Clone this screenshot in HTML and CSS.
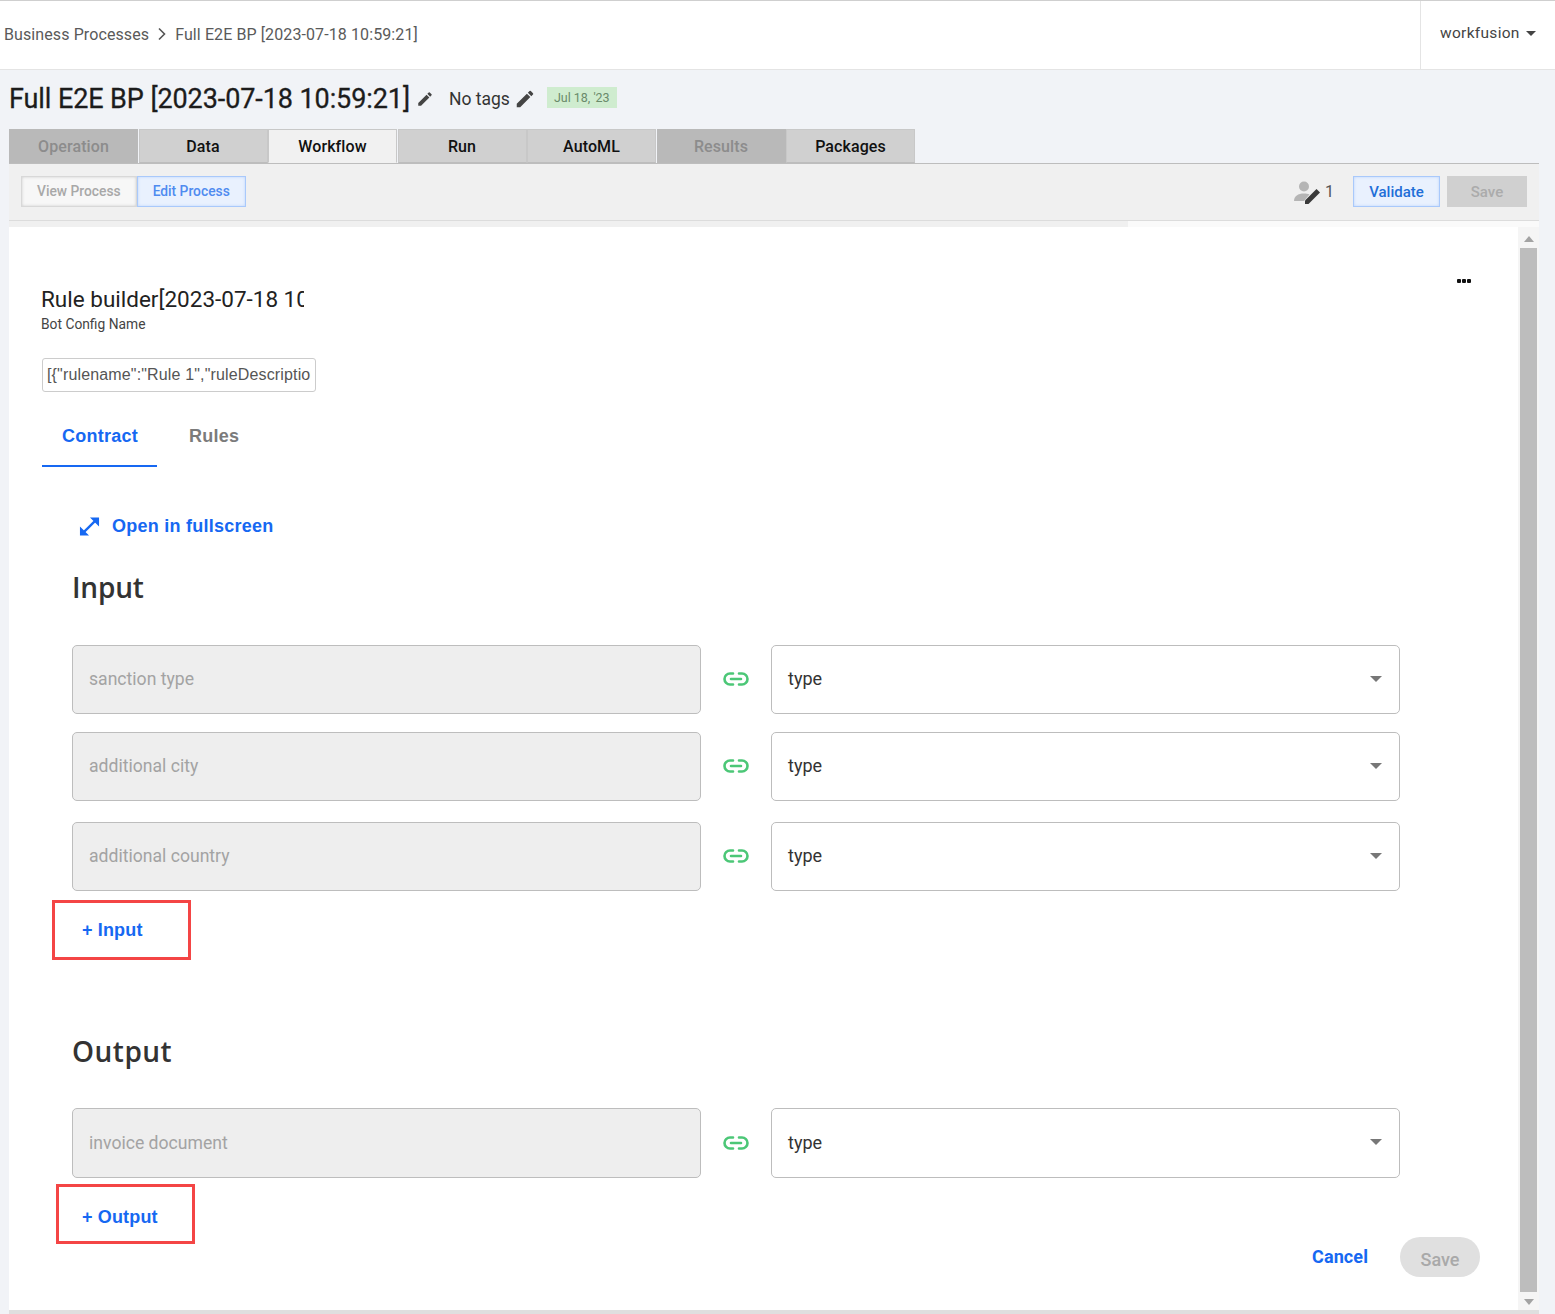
FILE: index.html
```html
<!DOCTYPE html>
<html>
  <head>
    <title>Full E2E BP</title>
    <meta charset="UTF-8">
    <link rel="stylesheet" href="styles.css">
  </head>

  <body>
    <div class="topbar">
      <div class="crumbs">
        <span>Business Processes</span>
        <svg class="crumb-sep" width="10" height="14" viewBox="0 0 10 14"><path d="M2 1.5 7.5 7 2 12.5" fill="none" stroke="#555" stroke-width="1.6"/></svg>
        <span>Full E2E BP [2023-07-18 10:59:21]</span>
      </div>
      <div class="user">workfusion <span class="user-caret"></span></div>
    </div>

    <div class="title-row">
      <h1>Full E2E BP [2023-07-18 10:59:21]</h1>
      <svg class="edit-title" width="18" height="18" viewBox="0 0 24 24"><path fill="#444" d="M3 17.25V21h3.75L17.81 9.94l-3.75-3.75L3 17.25zM20.71 7.04a1 1 0 0 0 0-1.41l-2.34-2.34a1 1 0 0 0-1.41 0l-1.83 1.83 3.75 3.75 1.83-1.83z"/></svg>
      <span class="tags">No tags</span>
      <svg class="edit-tags" width="22" height="22" viewBox="0 0 24 24"><path fill="#444" d="M3 17.25V21h3.75L17.81 9.94l-3.75-3.75L3 17.25zM20.71 7.04a1 1 0 0 0 0-1.41l-2.34-2.34a1 1 0 0 0-1.41 0l-1.83 1.83 3.75 3.75 1.83-1.83z"/></svg>
      <span class="date">Jul 18, '23</span>
    </div>

    <div class="tabs">
      <div class="tab disabled">Operation</div>
      <div class="tab">Data</div>
      <div class="tab active">Workflow</div>
      <div class="tab">Run</div>
      <div class="tab">AutoML</div>
      <div class="tab disabled">Results</div>
      <div class="tab">Packages</div>
    </div>

    <div class="panel">
      <div class="toolbar">
        <div class="mode">
          <div class="mode-btn">View Process</div>
          <div class="mode-btn on">Edit Process</div>
        </div>
        <div class="tools">
          <div class="editors">
            <svg width="30" height="24" viewBox="0 0 30 24">
              <circle cx="11" cy="6.5" r="5" fill="#b5b5b5"/>
              <path d="M1 21c0-5 4-7.500 10-7.500 2 0 4 .3 5.500 1L11 21z" fill="#b5b5b5"/>
              <path d="M12 24v-3.500L23.500 9l3.500 3.500L15.500 24z" fill="#3a3a3a"/>
            </svg>
            <span>1</span>
          </div>
          <div class="btn-validate">Validate</div>
          <div class="btn-save">Save</div>
        </div>
      </div>
      <div class="strip"></div>

      <div class="content">
        <div class="form">
          <div class="form-head">
            <div>
              <div class="bot-title">Rule builder[2023-07-18 10:59:21]</div>
              <div class="bot-label">Bot Config Name</div>
            </div>
            <div class="dots"><i></i><i></i><i></i></div>
          </div>
          <input class="config" type="text" value='[{"rulename":"Rule 1","ruleDescription":""}]' readonly>

          <div class="subtabs">
            <div class="subtab on">Contract</div>
            <div class="subtab">Rules</div>
          </div>

          <div class="fullscreen">
            <svg width="21" height="21" viewBox="0 0 22 22"><path fill="none" stroke="#1668f2" stroke-width="2.400" d="M4 18 18 4"/><path fill="#1668f2" d="M11.500 1.500H21v9.500zM1 11l9.500 9.500H1z"/></svg>
            <span>Open in fullscreen</span>
          </div>

          <h2 class="input-head">Input</h2>
          <div class="row">
            <div class="field">sanction type</div>
            <svg class="link" width="26" height="16" viewBox="0 0 26 16"><path fill="none" stroke="#4cc777" stroke-width="2.600" stroke-linecap="round" d="M10 2.500H7a5.500 5.500 0 0 0 0 11h3M16 2.500h3a5.500 5.500 0 0 1 0 11h-3M8 8h10"/></svg>
            <div class="select">type<span class="caret"></span></div>
          </div>
          <div class="row gap18">
            <div class="field">additional city</div>
            <svg class="link" width="26" height="16" viewBox="0 0 26 16"><path fill="none" stroke="#4cc777" stroke-width="2.600" stroke-linecap="round" d="M10 2.500H7a5.500 5.500 0 0 0 0 11h3M16 2.500h3a5.500 5.500 0 0 1 0 11h-3M8 8h10"/></svg>
            <div class="select">type<span class="caret"></span></div>
          </div>
          <div class="row gap21">
            <div class="field">additional country</div>
            <svg class="link" width="26" height="16" viewBox="0 0 26 16"><path fill="none" stroke="#4cc777" stroke-width="2.600" stroke-linecap="round" d="M10 2.500H7a5.500 5.500 0 0 0 0 11h3M16 2.500h3a5.500 5.500 0 0 1 0 11h-3M8 8h10"/></svg>
            <div class="select">type<span class="caret"></span></div>
          </div>
          <div class="add add-input">+ Input</div>

          <h2 class="output-head">Output</h2>
          <div class="row tall">
            <div class="field">invoice document</div>
            <svg class="link" width="26" height="16" viewBox="0 0 26 16"><path fill="none" stroke="#4cc777" stroke-width="2.600" stroke-linecap="round" d="M10 2.500H7a5.500 5.500 0 0 0 0 11h3M16 2.500h3a5.500 5.500 0 0 1 0 11h-3M8 8h10"/></svg>
            <div class="select">type<span class="caret"></span></div>
          </div>
          <div class="bottom">
            <div class="add add-output">+ Output</div>
            <div class="actions">
              <span class="cancel">Cancel</span>
              <span class="save">Save</span>
            </div>
          </div>
        </div>

        <div class="scroll">
          <span class="arrow-up"></span>
          <div class="thumb"></div>
          <span class="arrow-down"></span>
        </div>
      </div>
    </div>
  </body>
</html>
```

FILE: styles.css
```css
html, body {
  height: 100%;
}

body {
  margin: 0;
  padding: 0;
  height: 1314px;
  overflow: hidden;
  background-color: #f1f3f7;
  font-family: Roboto, "Liberation Sans", sans-serif;
  color: #222;
}

.topbar {
  display: flex;
  justify-content: space-between;
  height: 68px;
  background-color: #fff;
  border-top: 1px solid #cfcfcf;
  border-bottom: 1px solid #e4e4e4;
}

.crumbs {
  display: flex;
  align-items: center;
  gap: 8px;
  padding-left: 4px;
  padding-bottom: 2px;
  font-size: 16px;
  letter-spacing: 0.1px;
  color: #5a5a5a;
}

.user {
  display: flex;
  align-items: center;
  gap: 6px;
  box-sizing: border-box;
  width: 135px;
  padding-bottom: 4px;
  padding-left: 19px;
  border-left: 1px solid #e4e4e4;
  font-size: 15.500px;
  letter-spacing: 0.3px;
  color: #444;
}

.user-caret {
  border-top: 5px solid #444;
  border-left: 5px solid transparent;
  border-right: 5px solid transparent;
}

.title-row {
  display: flex;
  align-items: center;
  box-sizing: border-box;
  height: 59px;
  padding-left: 9px;
  padding-bottom: 2px;
}

h1 {
  margin: 0;
  font-size: 27px;
  font-weight: 400;
  color: #1c1c1c;
  -webkit-text-stroke: 0.3px #1c1c1c;
  letter-spacing: -0.09px;
}

.edit-title {
  margin-left: 6px;
}

.tags {
  margin-left: 15px;
  font-size: 17.500px;
  color: #333;
}

.edit-tags {
  margin-left: 4px;
}

.date {
  margin-left: 11px;
  margin-bottom: 2px;
  padding: 3px 7px;
  background-color: #cfeccf;
  font-size: 12.500px;
  color: #6a8a6a;
}

.tabs {
  display: flex;
  margin-left: 9px;
  height: 34px;
}

.tab {
  width: 127px;
  border: 1px solid #c8c8c8;
  border-bottom: 1px solid #bdbdbd;
  margin-right: 0.500px;
  background-color: #d0d0d0;
  font-size: 16px;
  font-weight: 500;
  letter-spacing: 0.1px;
  line-height: 34px;
  text-align: center;
  color: #111;
}

.tab.disabled {
  background-color: #b9b9b9;
  border-color: #b9b9b9;
  color: #8c8c8c;
}

.tab.active {
  background-color: #f1f1f1;
  border-bottom-color: #f1f1f1;
}

.panel {
  margin-left: 9px;
  width: 1530px;
}

.toolbar {
  display: flex;
  justify-content: space-between;
  align-items: center;
  box-sizing: border-box;
  height: 58px;
  padding: 0 12px 1px;
  background-color: #f0f0f0;
  border-top: 1px solid #bdbdbd;
  border-bottom: 1px solid #dcdcdc;
}

.mode {
  display: flex;
}

.mode-btn {
  padding: 0 15px;
  height: 29px;
  line-height: 29px;
  border: 1px solid #d8d8d8;
  box-shadow: inset 0 0 3px #ccc;
  background-color: #f7f7f7;
  font-size: 13.800px;
  font-weight: 500;
  color: #a8a8a8;
}

.mode-btn.on {
  border-color: #a9c9fb;
  box-shadow: inset 0 0 3px #bcd5fb;
  background-color: #e9f1fe;
  color: #4f8bf0;
}

.tools {
  display: flex;
  align-items: center;
}

.editors {
  display: flex;
  align-items: center;
  gap: 2px;
  margin-right: 19px;
  font-size: 16px;
  color: #555;
}

.btn-validate {
  width: 85px;
  height: 29px;
  line-height: 31px;
  text-align: center;
  border: 1px solid #a9c9fb;
  box-shadow: inset 0 0 3px #bcd5fb;
  background-color: #e9f1fe;
  font-size: 15px;
  font-weight: 500;
  color: #1f6fd8;
}

.btn-save {
  margin-left: 7px;
  width: 80px;
  height: 31px;
  line-height: 33px;
  text-align: center;
  background-color: #d0d0d0;
  font-size: 15px;
  font-weight: 500;
  color: #ababab;
}

.strip {
  height: 6px;
  background: linear-gradient(to right, #f0f0f0 1119px, #fafafa 1119px);
}

.content {
  display: flex;
  height: 1083px;
  background-color: #fff;
  border-bottom: 4px solid #dfdfdf;
}

.form {
  flex: 1;
  min-width: 0;
}

.form-head {
  display: flex;
  justify-content: space-between;
  padding: 59px 47px 0 32px;
  height: 72px;
}

.bot-title {
  width: 263px;
  overflow: hidden;
  white-space: nowrap;
  font-size: 22.500px;
  line-height: 27px;
  color: #222;
}

.bot-label {
  margin-top: 3px;
  font-size: 13.800px;
  color: #444;
}

.dots {
  display: flex;
  gap: 1px;
  margin-top: -7px;
}

.dots i {
  width: 4px;
  height: 4px;
  background-color: #111;
  border-radius: 1px;
}

.config {
  display: block;
  margin: 0 0 0 33px;
  width: 274px;
  height: 34px;
  padding: 0 4px;
  box-sizing: border-box;
  border: 1px solid #ccc;
  border-radius: 3px;
  font-family: "Liberation Sans", Arial, sans-serif;
  font-size: 16px;
  letter-spacing: 0.15px;
  color: #555;
  outline: none;
}

.subtabs {
  display: flex;
  margin: 10px 0 0 33px;
  height: 65px;
}

.subtab {
  padding: 0 19px 0 20px;
  height: 63px;
  line-height: 68px;
  font-family: "Liberation Sans", Arial, sans-serif;
  font-size: 18px;
  font-weight: 700;
  letter-spacing: 0.25px;
  color: #7b7b7b;
  margin-right: 12px;
}

.subtab.on {
  border-bottom: 2px solid #1668f2;
  color: #1668f2;
}

.fullscreen {
  display: flex;
  align-items: center;
  gap: 12px;
  margin: 49px 0 0 70px;
  font-family: "Liberation Sans", Arial, sans-serif;
  font-size: 18px;
  font-weight: 700;
  letter-spacing: 0.25px;
  color: #1668f2;
}

h2 {
  margin: 0;
  font-family: "Open Sans", "Noto Sans", sans-serif;
  font-size: 28px;
  font-weight: 600;
  letter-spacing: 0.2px;
  line-height: 34px;
  color: #333;
  margin-left: 63px;
}

.input-head {
  margin-top: 33px;
  margin-bottom: 41px;
  letter-spacing: -0.2px;
}

.output-head {
  margin-top: 74px;
  margin-bottom: 40px;
  letter-spacing: 0.5px;
}

.row {
  display: flex;
  align-items: center;
  margin-left: 63px;
  width: 1328px;
  height: 69px;
}

.row.gap18 {
  margin-top: 18px;
}

.row.gap21 {
  margin-top: 21px;
}

.row.tall {
  height: 70px;
}

.field, .select {
  display: flex;
  align-items: center;
  height: 100%;
  box-sizing: border-box;
  border: 1px solid #bdbdbd;
  border-radius: 5px;
  padding-left: 16px;
  padding-bottom: 2px;
  font-size: 18px;
}

.field {
  width: 629px;
  background-color: #eeeeee;
  font-size: 17.600px;
  color: #a3a3a3;
}

.link {
  margin: 0 22px 2px;
}

.select {
  justify-content: space-between;
  width: 629px;
  padding-right: 17px;
  background-color: #fff;
  color: #333;
}

.tall .field {
  padding-bottom: 0;
}

.tall .link {
  margin-bottom: 0;
}

.caret {
  border-top: 6px solid #777;
  border-left: 6px solid transparent;
  border-right: 6px solid transparent;
}

.add {
  box-sizing: border-box;
  height: 60px;
  border: 3px solid #f44545;
  padding-left: 27px;
  font-family: "Liberation Sans", Arial, sans-serif;
  font-size: 18px;
  font-weight: 700;
  letter-spacing: 0.15px;
  line-height: 54px;
  color: #1668f2;
}

.add-input {
  margin: 9px 0 0 43px;
  width: 139px;
}

.add-output {
  margin: 6px 0 0 47px;
  width: 139px;
  padding-left: 23px;
  line-height: 60px;
}

.bottom {
  display: flex;
  justify-content: space-between;
  align-items: flex-start;
  padding-right: 38px;
}

.actions {
  display: flex;
  align-items: center;
  gap: 32px;
  margin-top: 59px;
}

.cancel {
  margin-bottom: 2px;
  font-size: 18px;
  font-weight: 700;
  letter-spacing: 0.1px;
  color: #1668f2;
}

.save {
  width: 80px;
  height: 40px;
  line-height: 46px;
  border-radius: 20px;
  text-align: center;
  background-color: #e0e0e0;
  font-size: 18px;
  font-weight: 500;
  color: #a9a9a9;
}

.scroll {
  display: flex;
  flex-direction: column;
  align-items: center;
  width: 21px;
  background-color: #f5f5f5;
}

.arrow-up {
  margin: 9px 0 6px;
  border-bottom: 6px solid #a3a3a3;
  border-left: 5px solid transparent;
  border-right: 5px solid transparent;
}

.thumb {
  flex: 1;
  width: 17px;
  background-color: #bdbdbd;
}

.arrow-down {
  margin: 7px 0 5px;
  border-top: 6px solid #a3a3a3;
  border-left: 5px solid transparent;
  border-right: 5px solid transparent;
}
```
